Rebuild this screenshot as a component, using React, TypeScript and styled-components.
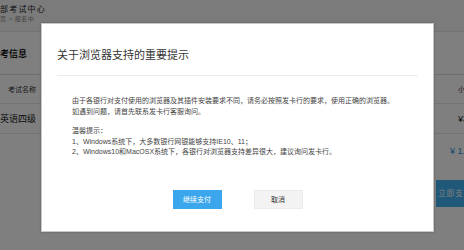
import styled, { createGlobalStyle } from "styled-components";

const GlobalStyle = createGlobalStyle`
  html, body {
    margin: 0;
    padding: 0;
    background: #ffffff;
  }
  body {
    font-family: "Liberation Sans", "Noto Sans CJK SC", sans-serif;
  }
`;

const Page = styled.div`
  position: relative;
  width: 464px;
  height: 250px;
  overflow: hidden;
  background: #ffffff;
`;

const Content = styled.div`
  width: 500px;
  display: flex;
  flex-direction: column;
`;

const Header = styled.div`
  height: 32px;
  background: #f7f7f7;
  border-bottom: 1px solid #e6e6e6;
  padding-top: 4px;
  box-sizing: border-box;
`;

const Brand = styled.div`
  font-size: 8px;
  line-height: 11px;
  letter-spacing: 1.2px;
  color: #222;
`;

const Crumb = styled.div`
  font-size: 6px;
  line-height: 9px;
  color: #888;
  letter-spacing: 0.5px;
`;

const SectionTitle = styled.div`
  margin-top: 16px;
  font-size: 9px;
  line-height: 12px;
  color: #111;
  font-weight: bold;
  padding-bottom: 14px;
  border-bottom: 1px solid #e0e0e0;
`;

const Row = styled.div<{ $head?: boolean }>`
  display: flex;
  justify-content: space-between;
  align-items: center;
  height: ${(p) => (p.$head ? "28px" : "29px")};
  border-bottom: 1px solid #e6e6e6;
  color: ${(p) => (p.$head ? "#333" : "#111")};
  font-size: ${(p) => (p.$head ? "7px" : "9px")};
`;

const Cell = styled.span<{ $indent?: number; $right?: number }>`
  padding-left: ${(p) => p.$indent ?? 0}px;
  width: ${(p) => p.$right ?? 42}px;
`;

const Total = styled.div`
  display: flex;
  justify-content: flex-end;
  padding: 12px 0 0;
  font-size: 9px;
  color: #2a8fd6;
  height: 24px;
`;

const TotalText = styled.span`
  width: 50px;
`;

const PayWrap = styled.div`
  display: flex;
  justify-content: flex-end;
  margin-top: 10px;
`;

const PayButton = styled.div`
  width: 64px;
  height: 27px;
  background: #3fb0f0;
  color: #fff;
  font-size: 8px;
  line-height: 27px;
  padding-left: 2px;
  box-sizing: border-box;
  letter-spacing: 0.5px;
`;

const Overlay = styled.div`
  position: absolute;
  inset: 0;
  background: rgba(0, 0, 0, 0.5);
`;

const Dialog = styled.div`
  position: absolute;
  left: 41px;
  top: 23px;
  width: 393px;
  height: 209px;
  box-sizing: border-box;
  background: #ffffff;
  border: 1px solid #c8c8c8;
  box-shadow: 0 0 2px rgba(0, 0, 0, 0.3);
  padding: 0 15px;
  display: flex;
  flex-direction: column;
`;

const DialogTitle = styled.div`
  padding: 23px 0 12px 0;
  font-size: 11px;
  line-height: 16px;
  color: #333;
  border-bottom: 1px solid #ececec;
`;

const DialogBody = styled.div`
  padding: 20px 0 0 15px;
  font-size: 7px;
  line-height: 10.5px;
  color: #444;
`;

const Para = styled.p`
  margin: 0 0 9px 0;
`;

const Buttons = styled.div`
  display: flex;
  justify-content: center;
  gap: 32px;
  margin-top: 23px;
`;

const Button = styled.div<{ $primary?: boolean }>`
  width: 49px;
  height: 19px;
  box-sizing: border-box;
  display: flex;
  align-items: center;
  justify-content: center;
  font-size: 7px;
  background: ${(p) => (p.$primary ? "#3ba6ec" : "#f3f3f3")};
  color: ${(p) => (p.$primary ? "#ffffff" : "#333333")};
  border: 1px solid ${(p) => (p.$primary ? "#3ba6ec" : "#ececec")};
`;

export default function App() {
  return (
    <Page>
      <GlobalStyle />
      <Content>
        <Header>
          <Brand>部考试中心</Brand>
          <Crumb>页 &gt; 报名中</Crumb>
        </Header>
        <SectionTitle>考信息</SectionTitle>
        <Row $head>
          <Cell $indent={8} $right={60}>考试名称</Cell>
          <Cell $right={42}>小计</Cell>
        </Row>
        <Row>
          <Cell $right={60}>英语四级</Cell>
          <Cell $right={42}>¥30.00</Cell>
        </Row>
        <Total>
          <TotalText>¥ 1.00</TotalText>
        </Total>
        <PayWrap>
          <PayButton>立即支付</PayButton>
        </PayWrap>
      </Content>
      <Overlay />
      <Dialog>
        <DialogTitle>关于浏览器支持的重要提示</DialogTitle>
        <DialogBody>
          <Para>
            由于各银行对支付使用的浏览器及其插件安装要求不同，请务必按照发卡行的要求，使用正确的浏览器。
            <br />
            如遇到问题，请首先联系发卡行客服询问。
          </Para>
          <Para>
            温馨提示：
            <br />
            1、Windows系统下，大多数银行网银能够支持IE10、11；
            <br />
            2、Windows10和MacOSX系统下，各银行对浏览器支持差异很大，建议询问发卡行。
          </Para>
        </DialogBody>
        <Buttons>
          <Button $primary>继续支付</Button>
          <Button>取消</Button>
        </Buttons>
      </Dialog>
    </Page>
  );
}
